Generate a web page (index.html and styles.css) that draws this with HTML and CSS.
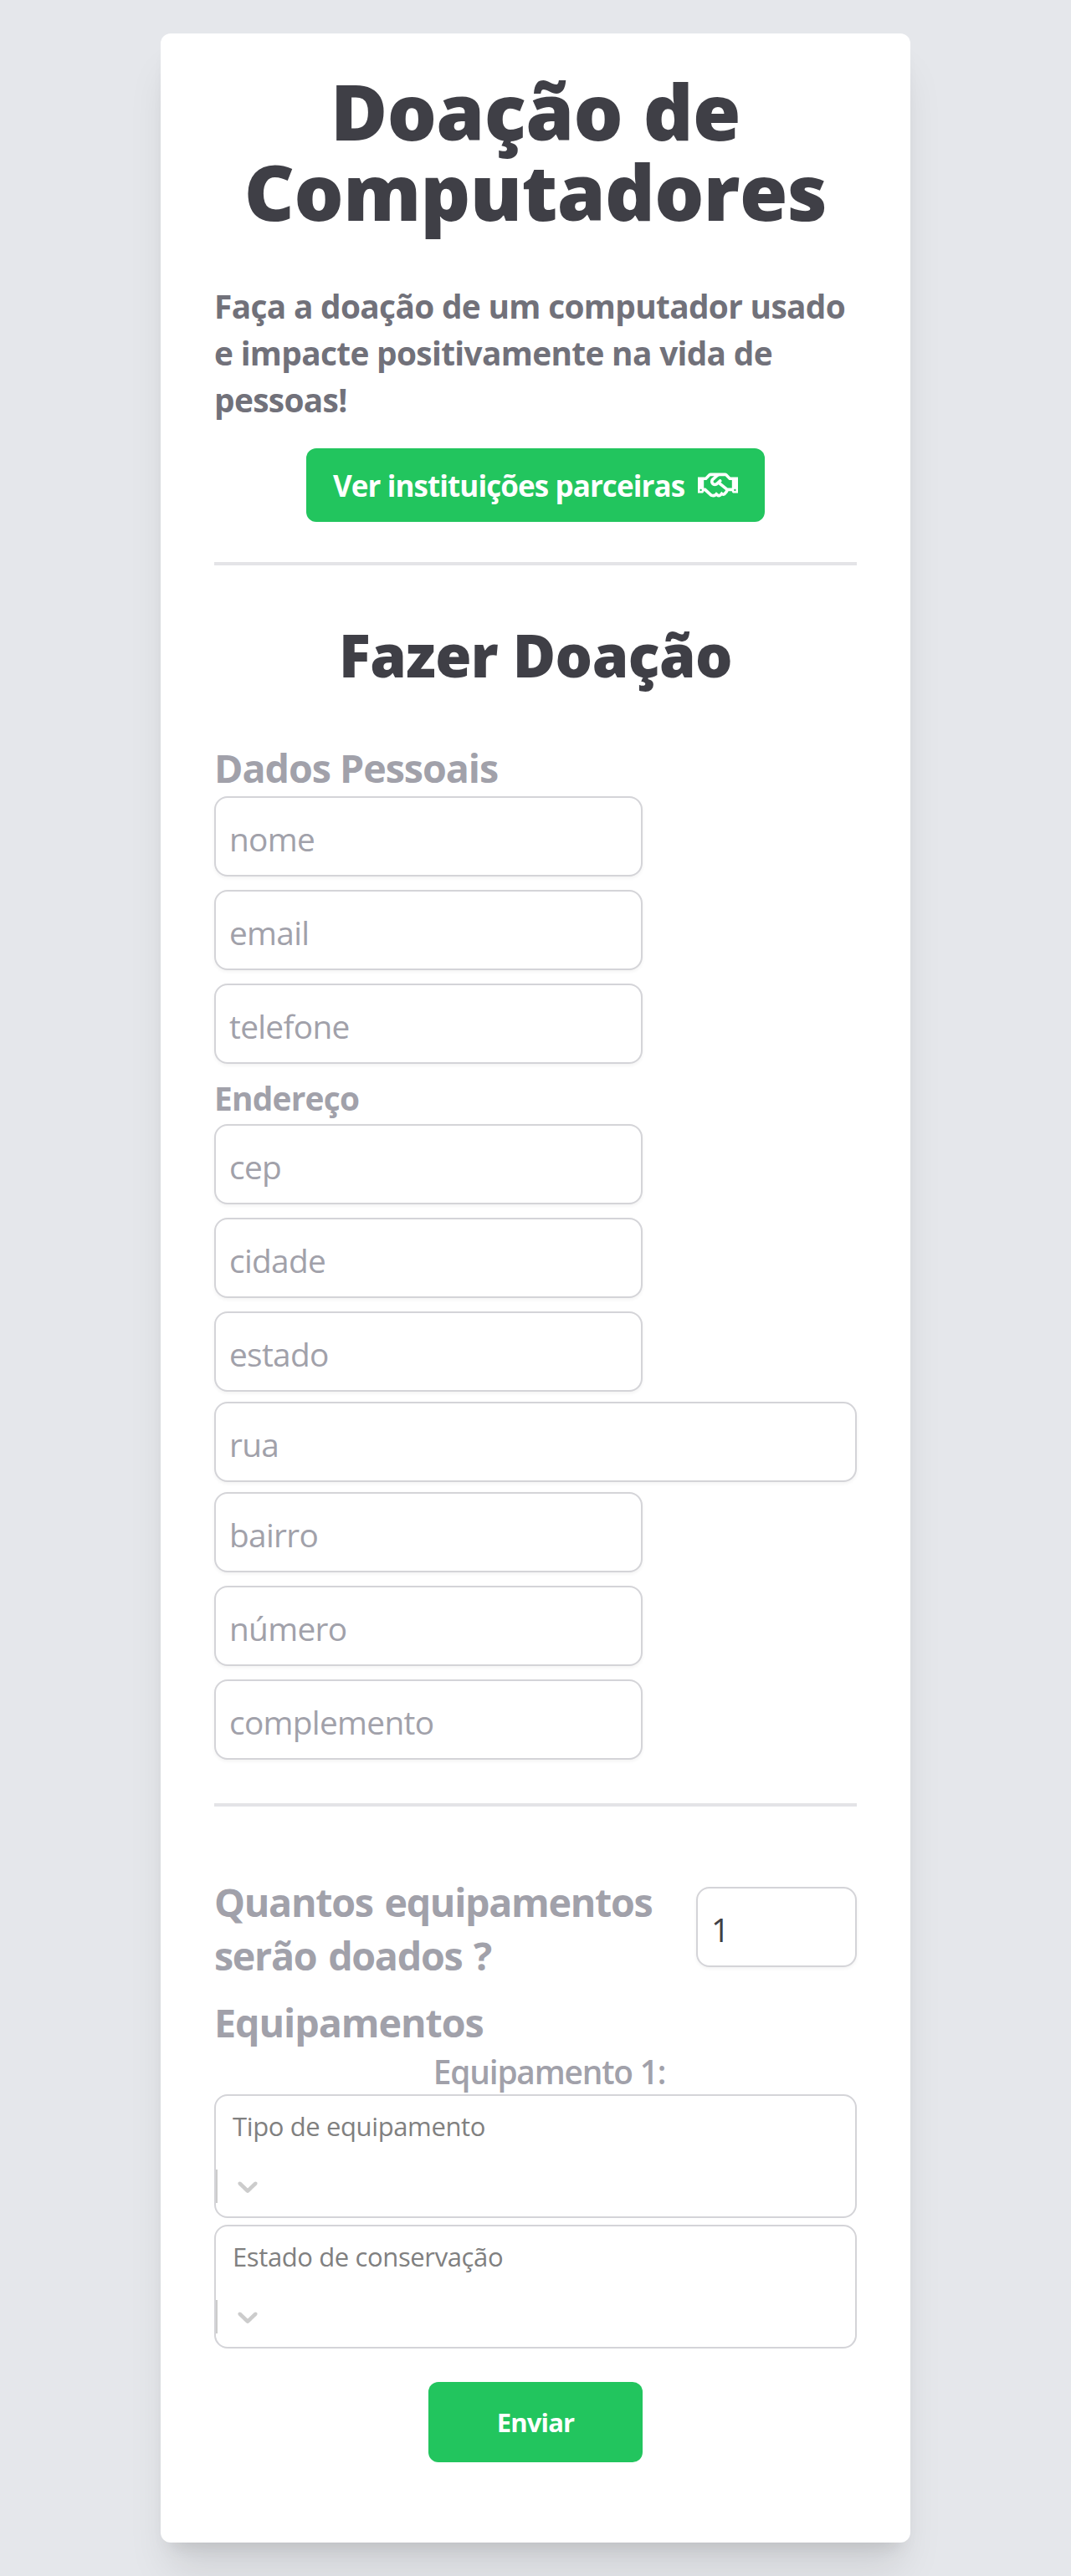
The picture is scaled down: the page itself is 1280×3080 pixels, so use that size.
FILE: index.html
```html
<!DOCTYPE html>
<html lang="pt-BR">
<head>
<meta charset="utf-8">
<title>Doação de Computadores</title>
<link rel="stylesheet" href="styles.css">
</head>
<body>
<main class="card">
  <h1 class="title">Doação de Computadores</h1>
  <p class="lead">Faça a doação de um computador usado<br>e impacte positivamente na vida de<br>pessoas!</p>
  <a class="btn partners" href="#">
    <span>Ver instituições parceiras</span>
    <svg class="handshake" viewBox="0 0 640 512" fill="currentColor" aria-hidden="true"><path d="M519.2 127.9l-47.6-47.6A56.252 56.252 0 0 0 432 64H205.2c-14.8 0-29.1 5.9-39.6 16.3L118 127.9H0v255.7h64c17.6 0 31.8-14.2 31.9-31.7h9.1l84.6 76.4c30.9 25.1 73.8 25.7 105.6 3.8 12.5 10.8 26 15.9 41.1 15.9 18.2 0 35.3-7.4 48.8-24 22.1 8.7 48.2 2.6 64-16.8l26.2-32.3c5.6-6.9 9.1-14.8 10.9-23h57.9c.1 17.5 14.4 31.7 31.9 31.7h64V127.9H519.2zM48 351.6c-8.8 0-16-7.2-16-16s7.2-16 16-16 16 7.2 16 16c0 8.9-7.2 16-16 16zm390-6.9l-26.1 32.2c-2.8 3.4-7.8 4-11.3 1.2l-23.9-19.4-30 36.5c-6 7.3-15 4.8-18 2.4l-36.8-31.5-15.6 19.2c-13.9 17.1-39.2 19.7-55.3 6.6l-97.3-88H96V175.8h41.9l61.7-61.6c2-.8 3.7-1.5 5.7-2.3H262l-38.7 35.5c-29.4 26.9-31.1 72.3-4.4 101.3 14.8 16.2 61.2 41.2 101.5 4.4l8.2-7.5 108.2 87.8c3.4 2.8 3.9 7.9 1.2 11.3zm106-40.8h-69.2c-2.3-2.8-4.9-5.4-7.7-7.7l-102.7-83.4 12.5-11.4c6.5-6 7-16.1 1-22.6L367 167.1c-6-6.5-16.1-6.9-22.6-1l-55.2 50.6c-9.5 8.7-25.7 9.4-34.6 0-9.3-9.9-8.5-25.1 1.2-33.9l65.6-60.1c7.4-6.8 17-10.5 27-10.5l83.7-.2c2.1 0 4.1.8 5.5 2.3l61.7 61.6H544v128zm48 47.7c-8.8 0-16-7.2-16-16s7.2-16 16-16 16 7.2 16 16c0 8.9-7.2 16-16 16z"/></svg>
  </a>
  <hr class="divider">
  <h2 class="subtitle">Fazer Doação</h2>
  <form class="form">
    <h3 class="section">Dados Pessoais</h3>
    <div class="fields">
      <input class="field" placeholder="nome">
      <input class="field" placeholder="email">
      <input class="field" placeholder="telefone">
    </div>
    <h4 class="section section-small">Endereço</h4>
    <div class="fields">
      <input class="field" placeholder="cep">
      <input class="field" placeholder="cidade">
      <input class="field" placeholder="estado">
    </div>
    <input class="field field-wide" placeholder="rua">
    <div class="fields">
      <input class="field" placeholder="bairro">
      <input class="field" placeholder="número">
      <input class="field" placeholder="complemento">
    </div>
    <hr class="divider divider-form">
    <div class="quantity">
      <label class="section quantity-label" for="qtd">Quantos equipamentos<br>serão doados ?</label>
      <input class="field field-number" id="qtd" value="1">
    </div>
    <h3 class="section equipment">Equipamentos</h3>
    <h4 class="equipment-name">Equipamento 1:</h4>
    <div class="selects">
      <div class="select">
        <span class="select-label">Tipo de equipamento</span>
        <span class="indicator"><svg class="chevron" viewBox="0 0 20 20" fill="currentColor" aria-hidden="true"><path d="M4.516 7.548c0.436-0.446 1.043-0.481 1.576 0l3.908 3.747 3.908-3.747c0.533-0.481 1.141-0.446 1.574 0 0.436 0.445 0.408 1.197 0 1.615-0.406 0.418-4.695 4.502-4.695 4.502-0.217 0.223-0.502 0.335-0.787 0.335s-0.57-0.112-0.789-0.335c0 0-4.287-4.084-4.695-4.502s-0.436-1.17 0-1.615z"/></svg></span>
      </div>
      <div class="select">
        <span class="select-label">Estado de conservação</span>
        <span class="indicator"><svg class="chevron" viewBox="0 0 20 20" fill="currentColor" aria-hidden="true"><path d="M4.516 7.548c0.436-0.446 1.043-0.481 1.576 0l3.908 3.747 3.908-3.747c0.533-0.481 1.141-0.446 1.574 0 0.436 0.445 0.408 1.197 0 1.615-0.406 0.418-4.695 4.502-4.695 4.502-0.217 0.223-0.502 0.335-0.787 0.335s-0.57-0.112-0.789-0.335c0 0-4.287-4.084-4.695-4.502s-0.436-1.17 0-1.615z"/></svg></span>
      </div>
    </div>
    <button class="btn submit" type="button">Enviar</button>
  </form>
</main>
</body>
</html>
```
FILE: styles.css
```css
* {
  box-sizing: border-box;
  margin: 0;
}

body {
  min-height: 3080px;
  padding-top: 40px;
  background: #e5e7eb;
  font-family: "Open Sans", "Noto Sans", sans-serif;
  overflow: hidden;
}

.card {
  display: flex;
  flex-direction: column;
  width: 896px;
  height: 3000px;
  margin: 0 auto;
  padding: 44px 64px 0;
  border-radius: 12px;
  background: #fff;
  box-shadow: 0 40px 50px -10px rgba(0, 0, 0, 0.1), 0 16px 20px -12px rgba(0, 0, 0, 0.1);
}

.title {
  color: #3f3f46;
  font-size: 93px;
  font-weight: 800;
  line-height: 96px;
  letter-spacing: -0.6px;
  word-spacing: 1px;
  text-align: center;
}

.lead {
  margin-top: 62px;
  color: #71717a;
  font-size: 38.8px;
  font-weight: 700;
  line-height: 56px;
  letter-spacing: -0.66px;
  white-space: nowrap;
}

.btn {
  display: flex;
  align-items: center;
  justify-content: center;
  border: 0;
  border-radius: 12px;
  background: #22c55e;
  color: #fff;
  font-family: inherit;
  font-weight: 700;
  text-decoration: none;
  white-space: nowrap;
}

.partners {
  align-self: center;
  justify-content: space-between;
  width: 548px;
  height: 88px;
  margin-top: 30px;
  padding: 0 32px;
  font-size: 35px;
  letter-spacing: -0.92px;
}

.handshake {
  width: 48px;
  height: 48px;
}

.divider {
  width: 100%;
  height: 4px;
  margin-top: 48px;
  border: 0;
  background: #e4e4e7;
}

.subtitle {
  margin-top: 67px;
  color: #3f3f46;
  font-size: 70px;
  font-weight: 800;
  line-height: 80px;
  letter-spacing: -0.55px;
  text-align: center;
}

.form {
  display: flex;
  flex-direction: column;
  margin-top: 63px;
}

.section {
  color: #a1a1aa;
  font-size: 46.6px;
  font-weight: 700;
  line-height: 64px;
  letter-spacing: -1.04px;
  margin-bottom: 2px;
}

.section-small {
  margin: 13px 0 3px;
  font-size: 38.8px;
  line-height: 56px;
  letter-spacing: -0.75px;
}

.fields {
  display: flex;
  flex-direction: column;
  gap: 16px;
}

.field {
  width: 512px;
  height: 96px;
  padding: 5px 16px 0;
  border: 2px solid #d4d4d8;
  border-radius: 16px;
  background: #fff;
  box-shadow: 0 2px 4px rgba(0, 0, 0, 0.05);
  color: #3f3f46;
  font-family: inherit;
  font-size: 38.8px;
  letter-spacing: -0.68px;
}

.field::placeholder {
  color: #a1a1aa;
  opacity: 1;
}

.field-wide {
  width: 100%;
  margin: 12px 0;
}

.divider-form {
  margin-top: 52px;
}

.quantity {
  display: flex;
  align-items: flex-start;
  justify-content: space-between;
  margin-top: 82px;
}

.quantity-label {
  margin: 0;
  letter-spacing: -1.3px;
  word-spacing: 3px;
  white-space: nowrap;
}

.field-number {
  width: 192px;
  margin-top: 14px;
}

.equipment {
  margin: 16px 0 0;
}

.equipment-name {
  padding: 1px 0 0 33px;
  color: #a1a1aa;
  font-size: 38.8px;
  font-weight: 600;
  line-height: 53px;
  letter-spacing: -1.18px;
  text-align: center;
}

.selects {
  display: flex;
  flex-direction: column;
  gap: 8px;
}

.select {
  display: flex;
  flex-direction: column;
  height: 148px;
  border: 2px solid #d4d4d8;
  border-radius: 16px;
}

.select-label {
  padding: 12px 20px 0;
  color: #808080;
  font-size: 31px;
  line-height: 48px;
  letter-spacing: -0.38px;
}

.indicator {
  display: flex;
  height: 40px;
  margin-top: 28px;
  padding-left: 16px;
  border-left: 2px solid #ccc;
  color: #ccc;
}

.chevron {
  width: 40px;
  height: 40px;
}

.submit {
  align-self: center;
  width: 256px;
  height: 96px;
  margin-top: 40px;
  font-size: 31px;
  letter-spacing: -0.85px;
}
```
